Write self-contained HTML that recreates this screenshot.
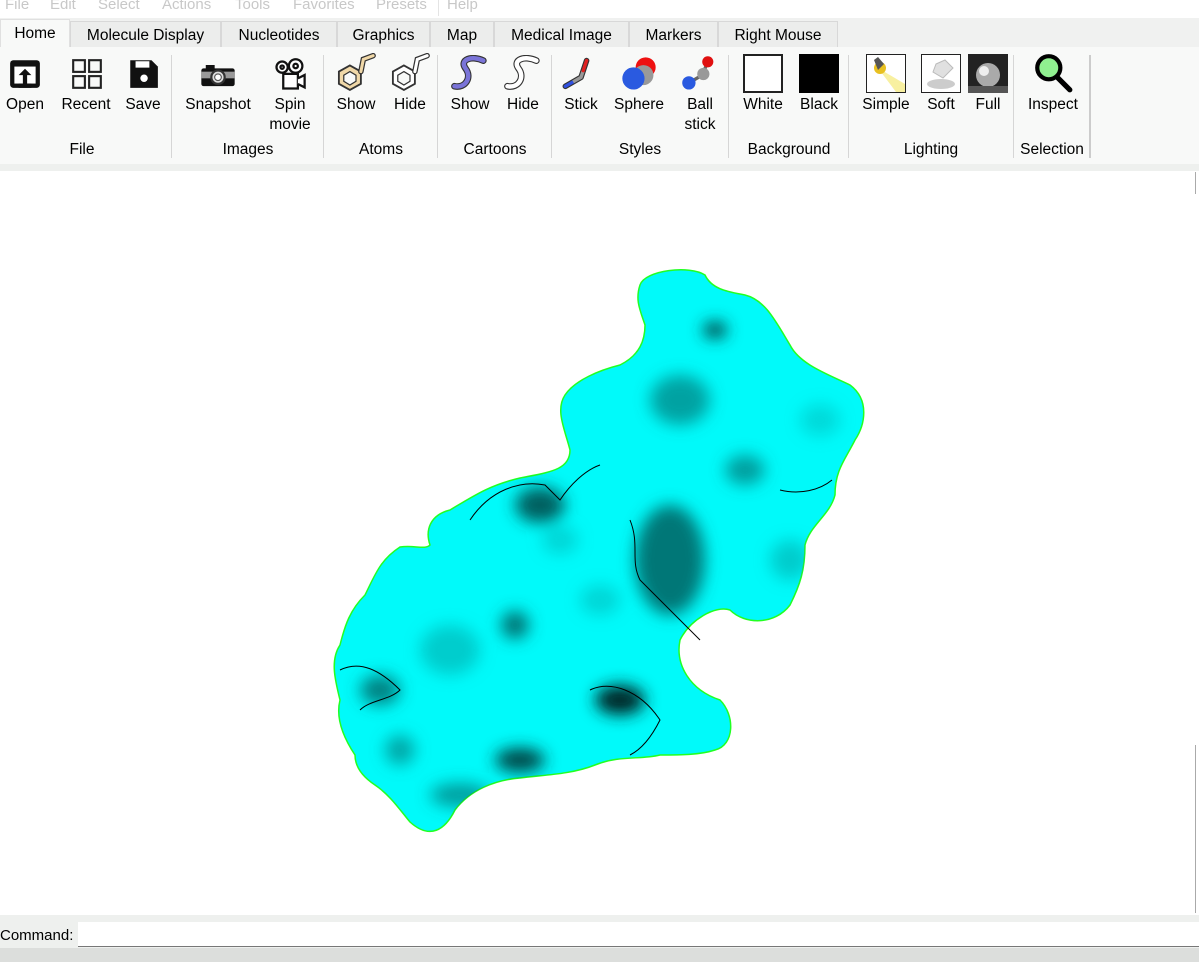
<!DOCTYPE html>
<html><head><meta charset="utf-8"><style>
*{margin:0;padding:0;box-sizing:border-box}
body{width:1199px;height:962px;overflow:hidden;background:#fff;font-family:"Liberation Sans",sans-serif;font-size:15px;color:#000;position:relative}
.abs{position:absolute}
#menu{left:0;top:0;width:1199px;height:18px;background:#fff;color:#c8c8c8;font-size:15px}
#menu span{position:absolute;top:-4px}
#tabbar{left:0;top:18px;width:1199px;height:29px;background:#f0f1f0}
.tab{position:absolute;top:3px;height:26px;border:1px solid #d8d8d8;border-bottom:none;background:#ecedec;text-align:center;line-height:27px;font-size:15.5px}
.tab.on{background:#f8f9f8;top:1px;height:28px;border-color:#e0e0e0}
#ribbon{left:0;top:47px;width:1199px;height:117px;background:#f8f9f8}
.sep{position:absolute;top:8px;width:1px;height:103px;background:#d6d6d6}
.lbl{position:absolute;top:48px;text-align:center;width:80px;margin-left:-40px;line-height:20px;font-size:15.5px}
.glbl{position:absolute;top:94px;text-align:center;width:120px;margin-left:-60px;font-size:15.5px}
.ic{position:absolute;top:8px}
#strip{left:0;top:164px;width:1199px;height:7px;background:#eef0ee}
#cmd{left:0;top:915px;width:1199px;height:33px;background:#eef0ee}
#bottom{left:0;top:948px;width:1199px;height:14px;background:#dcdedc}
</style></head><body>
<div id="menu" class="abs"><span style="left:5px">File</span><span style="left:50px">Edit</span><span style="left:98px">Select</span><span style="left:162px">Actions</span><span style="left:235px">Tools</span><span style="left:293px">Favorites</span><span style="left:376px">Presets</span><span style="left:447px">Help</span><div style="position:absolute;left:438px;top:0;width:1px;height:16px;background:#e4e4e4"></div></div>
<div id="tabbar" class="abs">
<div class="tab on" style="left:0;width:70px">Home</div>
<div class="tab" style="left:70px;width:151px">Molecule Display</div>
<div class="tab" style="left:221px;width:116px">Nucleotides</div>
<div class="tab" style="left:337px;width:93px">Graphics</div>
<div class="tab" style="left:430px;width:64px">Map</div>
<div class="tab" style="left:494px;width:135px">Medical Image</div>
<div class="tab" style="left:629px;width:89px">Markers</div>
<div class="tab" style="left:718px;width:120px">Right Mouse</div>
</div>
<div id="ribbon" class="abs">
<div class="sep" style="left:171px"></div><div class="sep" style="left:323px"></div><div class="sep" style="left:437px"></div><div class="sep" style="left:551px"></div><div class="sep" style="left:728px"></div><div class="sep" style="left:848px"></div><div class="sep" style="left:1013px"></div><div class="sep" style="left:1089px;width:2px;background:#ccc"></div>
<svg class="ic" style="left:8px;top:10px" width="34" height="34" viewBox="0 0 32 32"><rect x="2" y="3" width="28" height="26" rx="3" fill="#111"/><rect x="6" y="9" width="20" height="16" fill="#fff"/><path d="M16 11 L10 17 H14 V27 H18 V17 H22 Z" fill="#111"/><rect x="10" y="25" width="12" height="4" fill="#111"/></svg>
<svg class="ic" style="left:70px;top:10px" width="34" height="34" viewBox="0 0 32 32" fill="none" stroke="#222" stroke-width="2"><rect x="3" y="3" width="11" height="11"/><rect x="18" y="3" width="11" height="11"/><rect x="3" y="18" width="11" height="11"/><rect x="18" y="18" width="11" height="11"/></svg>
<svg class="ic" style="left:126px;top:10px" width="34" height="34" viewBox="0 0 32 32"><path d="M4 3 H24 L30 9 V29 H4 Z" fill="#111"/><rect x="9" y="4" width="13" height="6" fill="#fff"/><circle cx="17" cy="20" r="3.5" fill="#fff"/></svg>
<svg class="ic" style="left:198px;top:10px" width="40" height="36" viewBox="0 0 36 32"><rect x="3" y="10" width="30" height="16" rx="2" fill="#111"/><rect x="7" y="7" width="8" height="4" fill="#111"/><rect x="3" y="13" width="30" height="6" fill="#999"/><circle cx="18" cy="18" r="6" fill="#ddd" stroke="#333" stroke-width="2"/><circle cx="18" cy="18" r="3" fill="#fff" stroke="#555"/></svg>
<svg class="ic" style="left:272px;top:10px" width="36" height="36" viewBox="0 0 32 32" fill="#fff" stroke="#111" stroke-width="2"><circle cx="9" cy="9" r="5"/><circle cx="21" cy="8" r="6"/><circle cx="9" cy="9" r="1.5"/><circle cx="21" cy="8" r="2"/><rect x="10" y="15" width="13" height="13"/><path d="M23 19 L29 16 V27 L23 24"/></svg>
<svg class="ic" style="left:334px;top:6px" width="44" height="42" viewBox="0 0 36 34"><path d="M13 10 L22 15 V25 L13 30 L4 25 V15 Z" fill="#f0d8a8" stroke="#333" stroke-width="1.5"/><path d="M13 15 L18 18 V23 L13 26 L8 23 V18 Z" fill="#f8f9f8" stroke="#333" stroke-width="1"/><path d="M22 15 L24 5 L32 2" fill="none" stroke="#333" stroke-width="4.5" stroke-linecap="round"/><path d="M22 15 L24 5 L32 2" fill="none" stroke="#f0d8a8" stroke-width="2.5" stroke-linecap="round"/></svg>
<svg class="ic" style="left:388px;top:6px" width="44" height="42" viewBox="0 0 36 34"><path d="M13 10 L22 15 V25 L13 30 L4 25 V15 Z" fill="#fff" stroke="#333" stroke-width="1.5"/><path d="M13 15 L18 18 V23 L13 26 L8 23 V18 Z" fill="#f8f9f8" stroke="#333" stroke-width="1"/><path d="M22 15 L24 5 L32 2" fill="none" stroke="#333" stroke-width="4.5" stroke-linecap="round"/><path d="M22 15 L24 5 L32 2" fill="none" stroke="#fff" stroke-width="2.5" stroke-linecap="round"/></svg>
<svg class="ic" style="left:450px;top:8px" width="40" height="38" viewBox="0 0 36 34"><path d="M30 5 C20 0 8 4 14 12 C20 20 14 30 4 28" fill="none" stroke="#333" stroke-width="6" stroke-linecap="round"/><path d="M30 5 C20 0 8 4 14 12 C20 20 14 30 4 28" fill="none" stroke="#7a74d8" stroke-width="4" stroke-linecap="round"/></svg>
<svg class="ic" style="left:503px;top:8px" width="40" height="38" viewBox="0 0 36 34"><path d="M30 5 C20 0 8 4 14 12 C20 20 14 30 4 28" fill="none" stroke="#333" stroke-width="6" stroke-linecap="round"/><path d="M30 5 C20 0 8 4 14 12 C20 20 14 30 4 28" fill="none" stroke="#fff" stroke-width="4" stroke-linecap="round"/></svg>
<svg class="ic" style="left:562px;top:8px" width="38" height="38" viewBox="0 0 34 34"><path d="M3 28 L17 20 L22 5" fill="none" stroke="#333" stroke-width="5" stroke-linecap="round" stroke-linejoin="round"/><path d="M3 28 L10 24" stroke="#3050e0" stroke-width="3" stroke-linecap="round"/><path d="M10 24 L17 20 L19 14" fill="none" stroke="#999" stroke-width="3"/><path d="M19 14 L22 5" stroke="#e02020" stroke-width="3" stroke-linecap="round"/></svg>
<svg class="ic" style="left:619px;top:8px" width="40" height="38" viewBox="0 0 36 34"><circle cx="24" cy="11" r="9" fill="#ee1111"/><circle cx="22" cy="18" r="9" fill="#999"/><circle cx="13" cy="21" r="10" fill="#2a5ae0"/></svg>
<svg class="ic" style="left:680px;top:8px" width="40" height="38" viewBox="0 0 36 34"><path d="M8 25 L20 18 L25 6" stroke="#666" stroke-width="3" fill="none"/><circle cx="25" cy="6" r="5" fill="#e01010"/><circle cx="21" cy="17" r="5.5" fill="#999"/><circle cx="8" cy="25" r="6" fill="#2a5ae0"/></svg>
<div class="ic" style="left:743px;top:7px;width:40px;height:39px;border:2px solid #222;background:#fff"></div>
<div class="ic" style="left:799px;top:7px;width:40px;height:39px;background:#000"></div>
<svg class="ic" style="left:866px;top:7px" width="40" height="39" viewBox="0 0 40 39"><rect x="0.5" y="0.5" width="39" height="38" fill="#fff" stroke="#222"/><path d="M12 14 L39 30 V38 H30 Z" fill="#f8f0a0"/><circle cx="14" cy="14" r="6" fill="#e8c020"/><path d="M8 6 L12 3 L18 10 L12 16 Z" fill="#555"/></svg>
<svg class="ic" style="left:921px;top:7px" width="40" height="39" viewBox="0 0 40 39"><rect x="0.5" y="0.5" width="39" height="38" fill="#fff" stroke="#222"/><ellipse cx="20" cy="30" rx="14" ry="5" fill="#ccc"/><path d="M15 10 L24 6 L32 14 L22 24 L12 18 Z" fill="#e0e0e0" stroke="#bbb"/></svg>
<svg class="ic" style="left:968px;top:7px" width="40" height="39" viewBox="0 0 40 39"><rect x="0" y="0" width="40" height="39" fill="#222"/><circle cx="20" cy="21" r="12" fill="#aaa"/><circle cx="16" cy="17" r="5" fill="#eee"/><rect x="0" y="32" width="40" height="7" fill="#555"/></svg>
<svg class="ic" style="left:1032px;top:5px" width="42" height="42" viewBox="0 0 40 40"><path d="M24 24 L36 36" stroke="#000" stroke-width="5" stroke-linecap="round"/><circle cx="16" cy="15" r="11" fill="#90f090" stroke="#000" stroke-width="4"/></svg>
<div class="lbl" style="left:25px">Open</div><div class="lbl" style="left:86px">Recent</div><div class="lbl" style="left:143px">Save</div>
<div class="lbl" style="left:218px">Snapshot</div><div class="lbl" style="left:290px">Spin<br>movie</div>
<div class="lbl" style="left:356px">Show</div><div class="lbl" style="left:410px">Hide</div>
<div class="lbl" style="left:470px">Show</div><div class="lbl" style="left:523px">Hide</div>
<div class="lbl" style="left:581px">Stick</div><div class="lbl" style="left:639px">Sphere</div><div class="lbl" style="left:700px">Ball<br>stick</div>
<div class="lbl" style="left:763px">White</div><div class="lbl" style="left:819px">Black</div>
<div class="lbl" style="left:886px">Simple</div><div class="lbl" style="left:941px">Soft</div><div class="lbl" style="left:988px">Full</div>
<div class="lbl" style="left:1053px">Inspect</div>
<div class="glbl" style="left:82px">File</div><div class="glbl" style="left:248px">Images</div><div class="glbl" style="left:381px">Atoms</div><div class="glbl" style="left:495px">Cartoons</div><div class="glbl" style="left:640px">Styles</div><div class="glbl" style="left:789px">Background</div><div class="glbl" style="left:931px">Lighting</div><div class="glbl" style="left:1052px">Selection</div>
</div>
<div id="strip" class="abs"></div>
<div class="abs" style="left:1195px;top:172px;width:4px;height:22px;border-left:1px solid #aaa"></div>
<div class="abs" style="left:1195px;top:745px;width:4px;height:168px;border-left:1px solid #aaa"></div>
<svg class="abs" style="left:0;top:171px" width="1199" height="744" viewBox="0 171 1199 744">
<defs><filter id="b" x="-50%" y="-50%" width="200%" height="200%"><feGaussianBlur stdDeviation="8"/></filter>
<clipPath id="c"><path id="p" d="M640 285 C645 270 690 265 705 275 C712 290 730 292 745 295 C765 300 775 320 790 345 C800 365 830 375 850 385 C870 400 865 425 855 440 C845 460 835 470 835 495 C830 515 810 525 805 545 C805 570 800 585 790 605 C775 625 745 625 730 610 C715 605 690 620 680 640 C675 665 690 690 720 700 C735 715 735 745 715 750 C700 755 680 755 660 755 C640 760 620 755 595 765 C570 775 540 775 520 778 C495 780 470 790 455 810 C445 830 430 840 410 822 C400 810 390 795 375 785 C360 775 355 765 355 755 C345 740 335 720 340 700 C335 680 330 660 340 645 C345 625 350 610 365 595 C375 575 380 560 400 547 C415 545 425 550 430 545 C425 530 430 515 450 510 C475 495 490 485 520 478 C550 472 570 470 570 450 C565 430 555 410 565 395 C575 380 600 370 620 365 C640 355 645 340 645 325 C640 310 635 300 640 285 Z"/></clipPath></defs>
<use href="#p" fill="#00fafa" stroke="#22ff22" stroke-width="1.5"/>
<g clip-path="url(#c)" filter="url(#b)">
<ellipse cx="680" cy="400" rx="30" ry="25" fill="#006868" opacity=".6"/>
<ellipse cx="715" cy="330" rx="12" ry="8" fill="#003838"/>
<ellipse cx="670" cy="560" rx="35" ry="55" fill="#005555" opacity=".8"/>
<ellipse cx="745" cy="470" rx="20" ry="15" fill="#006060" opacity=".6"/>
<ellipse cx="540" cy="505" rx="25" ry="18" fill="#003838" opacity=".8"/>
<ellipse cx="515" cy="625" rx="14" ry="14" fill="#005050" opacity=".8"/>
<ellipse cx="620" cy="700" rx="25" ry="15" fill="#002828"/>
<ellipse cx="520" cy="760" rx="25" ry="12" fill="#003030" opacity=".9"/>
<ellipse cx="380" cy="690" rx="20" ry="15" fill="#005050" opacity=".7"/>
<ellipse cx="400" cy="750" rx="15" ry="15" fill="#007070" opacity=".6"/>
<ellipse cx="460" cy="795" rx="30" ry="12" fill="#006060" opacity=".6"/>
<ellipse cx="450" cy="650" rx="30" ry="25" fill="#00a0a0" opacity=".5"/>
<ellipse cx="790" cy="560" rx="20" ry="20" fill="#00a0a0" opacity=".5"/>
<ellipse cx="600" cy="600" rx="20" ry="15" fill="#00a0a0" opacity=".4"/>
<ellipse cx="560" cy="540" rx="18" ry="14" fill="#00a0a0" opacity=".4"/>
<ellipse cx="820" cy="420" rx="20" ry="16" fill="#00a0a0" opacity=".35"/>
</g>
<g fill="none" stroke="#000" stroke-width="1">
<path d="M470 520 C490 490 520 480 545 485 L560 500 C570 485 585 470 600 465"/>
<path d="M630 520 C640 545 630 560 640 580 C660 600 680 620 700 640"/>
<path d="M780 490 C800 495 820 490 832 480"/>
<path d="M340 670 C360 660 380 670 400 690 C390 700 370 700 360 710"/>
<path d="M590 690 C610 680 640 690 660 720 C650 740 640 750 630 755"/>
</g>
</svg>
<div id="cmd" class="abs"><span style="position:absolute;left:0;top:12px;font-size:15px">Command:</span><div style="position:absolute;left:78px;top:7px;width:1121px;height:25px;background:#fff;border-bottom:1px solid #777"></div></div>
<div id="bottom" class="abs"></div>
</body></html>
